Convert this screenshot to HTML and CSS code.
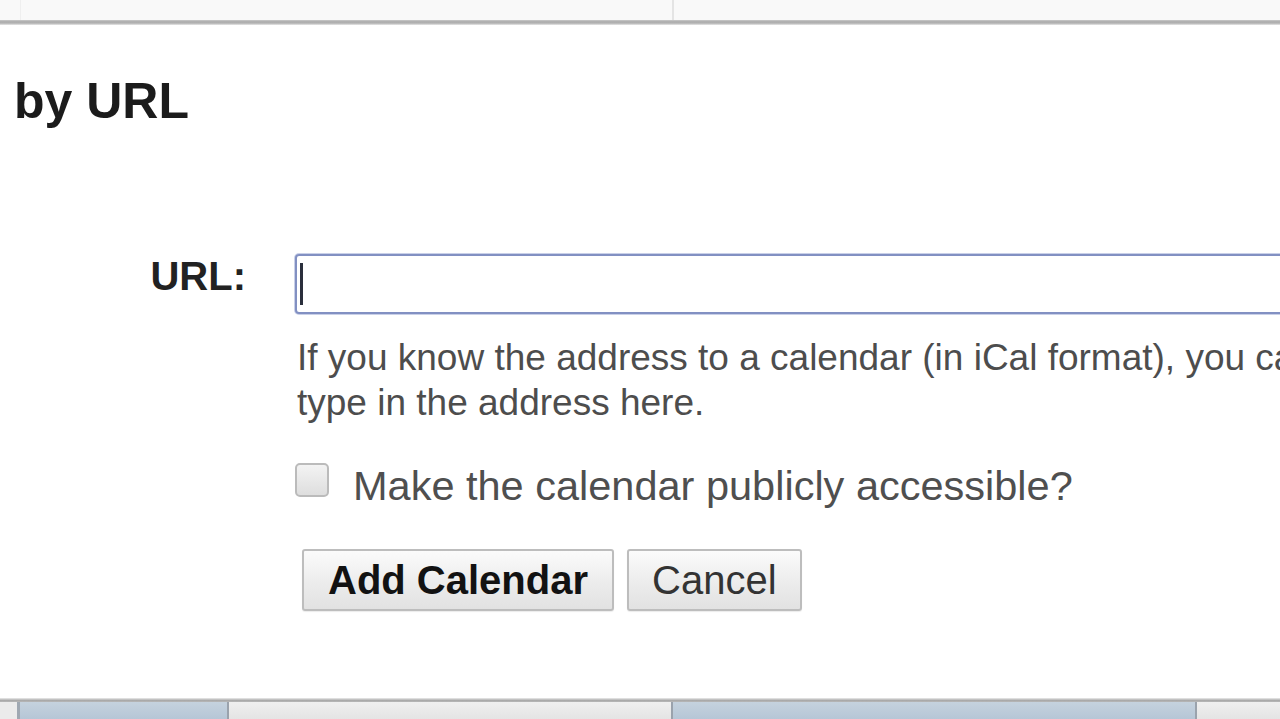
FILE: index.html
```html
<!DOCTYPE html>
<html>
<head>
<meta charset="utf-8">
<link rel="stylesheet" href="styles.css">
</head>
<body>
<div class="page">
  <div class="topbar">
    <div class="tb-cell tb-a"></div>
    <div class="tb-cell tb-b"></div>
    <div class="tb-cell tb-c"></div>
  </div>
  <div class="topline"></div>
  <main class="dialog">
    <h1 class="title">by URL</h1>
    <div class="form-row">
      <label class="label">URL:</label>
      <div class="field">
        <div class="input"><span class="caret"></span></div>
        <p class="help">If you know the address to a calendar (in iCal format), you can<br>type in the address here.</p>
        <div class="check-row">
          <span class="checkbox"></span>
          <span class="check-label">Make the calendar publicly accessible?</span>
        </div>
        <div class="buttons">
          <button class="btn btn-primary">Add Calendar</button>
          <button class="btn">Cancel</button>
        </div>
      </div>
    </div>
  </main>
  <div class="bottomline"></div>
  <div class="tabs">
    <div class="tab tab-edge"></div>
    <div class="tab tab-blue tab-1"></div>
    <div class="tab tab-grey tab-2"></div>
    <div class="tab tab-blue tab-3"></div>
    <div class="tab tab-grey tab-4"></div>
  </div>
</div>
</body>
</html>
```

FILE: styles.css
```css
* { box-sizing: border-box; }
html, body { margin: 0; padding: 0; }
body {
  background: #ffffff;
  font-family: "Liberation Sans", Arial, sans-serif;
  overflow: hidden;
  width: 1280px;
  height: 719px;
}
.page {
  display: flex;
  flex-direction: column;
  height: 719px;
  width: 1280px;
}
.topbar {
  display: flex;
  height: 20px;
  background: #f9f9f9;
  flex: none;
}
.tb-cell { height: 100%; }
.tb-a { width: 21px; border-right: 1px solid #efefef; }
.tb-b { width: 653px; border-right: 2px solid #e4e4e4; }
.tb-c { flex: 1; }
.topline {
  height: 5px;
  flex: none;
  background: linear-gradient(#c9c9c9, #a9a9a9 40%, #c4c4c4 80%, #efefef);
}
.dialog {
  flex: 1;
  padding: 48px 0 0 14px;
  overflow: hidden;
}
.title {
  margin: 0;
  font-size: 50px;
  font-weight: bold;
  color: #1b1b1b;
  line-height: 57px;
}
.form-row {
  display: flex;
  margin-top: 124px;
}
.label {
  width: 232px;
  text-align: right;
  font-size: 40px;
  font-weight: bold;
  color: #222;
  line-height: 45px;
  flex: none;
}
.field {
  margin-left: 49px;
  flex: none;
  width: 1100px;
}
.input {
  height: 60px;
  width: 1100px;
  border: 2px solid #8290c2;
  border-radius: 4px;
  box-shadow: 0 0 0 1px #c9d0e8;
  background: #fff;
  display: flex;
  align-items: center;
  padding-left: 3px;
}
.caret {
  width: 3px;
  height: 42px;
  background: #2a2f3c;
}
.help {
  margin: 21px 0 0 2px;
  font-size: 37px;
  line-height: 45px;
  color: #4d4d4d;
  white-space: nowrap;
}
.check-row {
  display: flex;
  align-items: flex-start;
  margin-top: 38px;
  height: 47px;
}
.checkbox {
  width: 34px;
  height: 34px;
  border: 2px solid #bbbbbb;
  border-radius: 5px;
  background: linear-gradient(#f3f3f3, #dedede);
  flex: none;
}
.check-label {
  margin-left: 24px;
  font-size: 41.5px;
  line-height: 47px;
  color: #4f4f4f;
  margin-top: -1px;
}
.buttons {
  display: flex;
  gap: 13px;
  margin-top: 39px;
  margin-left: 7px;
}
.btn {
  height: 62px;
  padding: 0 23px;
  font-family: "Liberation Sans", Arial, sans-serif;
  font-size: 40px;
  color: #333;
  background: linear-gradient(#fbfbfb, #ececec 55%, #e2e2e2);
  border: 2px solid #bdbdbd;
  border-radius: 3px;
  box-shadow: 0 1px 1px rgba(0,0,0,0.08);
  line-height: 1;
}
.btn-primary {
  font-weight: bold;
  color: #121212;
  padding: 0 24px;
}
.bottomline {
  height: 4px;
  flex: none;
  background: linear-gradient(#ececec, #a9a9a9 60%, #b8b8b8);
}
.tabs {
  display: flex;
  height: 17px;
  flex: none;
}
.tab { height: 100%; }
.tab-edge { width: 20px; background: #ebebeb; border-right: 3px solid #9fa8b2; }
.tab-blue { background: linear-gradient(#c5d2de, #b6c6d6); }
.tab-grey { background: linear-gradient(#efefef, #e4e4e4); }
.tab-1 { width: 209px; border-right: 2px solid #9aa2ac; }
.tab-2 { width: 444px; border-right: 2px solid #9aa2ac; }
.tab-3 { width: 524px; border-right: 2px solid #9aa2ac; }
.tab-4 { flex: 1; }
```
